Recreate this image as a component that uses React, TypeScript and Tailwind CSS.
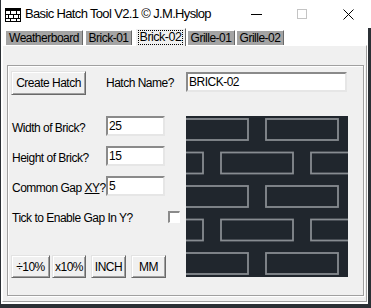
import React from "react";

const raised =
  "border border-t-[#e3e3e3] border-l-[#e3e3e3] border-r-[#696969] border-b-[#696969] shadow-[inset_1px_1px_0_#ffffff,inset_-1px_-1px_0_#a0a0a0] bg-[#f0f0f0]";
const sunken =
  "border-2 border-t-[#8a8a8a] border-l-[#8a8a8a] border-r-[#e6e6e6] border-b-[#e6e6e6] bg-white";

function TitleIcon() {
  return (
    <svg width="16" height="14" viewBox="0 0 16 14" className="shrink-0">
      <rect x="0.5" y="0.5" width="15" height="13" fill="#ffffff" stroke="#000" />
      <rect x="1" y="1" width="14" height="2" fill="#000" />
      <g stroke="#000" strokeWidth="1">
        <line x1="1" y1="6.5" x2="15" y2="6.5" />
        <line x1="1" y1="10.5" x2="15" y2="10.5" />
        <line x1="5.5" y1="3" x2="5.5" y2="6.5" />
        <line x1="11.5" y1="3" x2="11.5" y2="6.5" />
        <line x1="3.5" y1="6.5" x2="3.5" y2="10.5" />
        <line x1="8.5" y1="6.5" x2="8.5" y2="10.5" />
        <line x1="13.5" y1="6.5" x2="13.5" y2="10.5" />
        <line x1="5.5" y1="10.5" x2="5.5" y2="13" />
        <line x1="11.5" y1="10.5" x2="11.5" y2="13" />
      </g>
    </svg>
  );
}

function Tab({ label, width, ml, selected }: { label: string; width: number; ml: number; selected?: boolean }) {
  if (selected) {
    return (
      <div
        className="relative z-10 h-[18px] -mb-[1px] flex items-start justify-center pt-[1px] bg-[#f0f0f0] border-t border-l border-white border-r border-r-[#696969]"
        style={{ width, marginLeft: ml }}
      >
        <span className="px-[1px] leading-[13px] border border-dotted border-black text-[12.5px] tracking-[-0.5px] whitespace-nowrap">
          {label}
        </span>
      </div>
    );
  }
  return (
    <div
      className="h-[15px] flex items-center justify-center bg-[#a4a4a4] border-t border-l border-white border-r border-r-[#696969] text-[12px] tracking-[-0.5px] leading-none whitespace-nowrap"
      style={{ width, marginLeft: ml }}
    >
      {label}
    </div>
  );
}

function Field({ label, value }: { label: React.ReactNode; value: string }) {
  return (
    <div className="flex items-center h-[20px]">
      <div className="w-[95px] pl-[1px] pt-[3px] whitespace-nowrap">{label}</div>
      <div className={`${sunken} w-[59px] h-[20px] pl-[1px] flex items-center`}>{value}</div>
    </div>
  );
}

function Bricks() {
  const rows = [0, 1, 2, 3, 4];
  return (
    <svg width="162" height="161" viewBox="0 0 162 161" className="block">
      <rect width="162" height="161" fill="#20262d" />
      {rows.map((i) => {
        const y = 3 + i * 33.5;
        const xs = i % 2 === 0 ? [-10, 80, 170] : [-55, 35, 125];
        return xs.map((x) => (
          <rect
            key={`${i}-${x}`}
            x={x}
            y={y}
            width="72"
            height="21"
            fill="none"
            stroke="#878c91"
            strokeWidth="1.8"
          />
        ));
      })}
    </svg>
  );
}

export default function App() {
  return (
    <div className="w-[371px] h-[308px] bg-[#2b3035] flex flex-col font-['Liberation_Sans',Arial,sans-serif] text-black text-[12px] tracking-[-0.5px] overflow-hidden whitespace-nowrap">
      <div className="h-[28px] ml-[1px] bg-white flex items-center shrink-0">
        <div className="ml-[4px] mt-[1px]">
          <TitleIcon />
        </div>
        <div className="ml-[4px] text-[13px] tracking-[-0.65px] whitespace-nowrap">
          Basic Hatch Tool V2.1 © J.M.Hyslop
        </div>
        <div className="ml-auto flex h-full">
          <div className="w-[46px] h-full flex items-center justify-center">
            <div className="w-[11px] h-[1px] bg-black" />
          </div>
          <div className="w-[46px] h-full flex items-center justify-center">
            <div className="w-[10px] h-[10px] border border-[#c4c4c4]" />
          </div>
          <div className="w-[46px] h-full flex items-center justify-center">
            <svg width="11" height="11" viewBox="0 0 11 11">
              <path d="M0.5 0.5 L10.5 10.5 M10.5 0.5 L0.5 10.5" stroke="#000" strokeWidth="1" />
            </svg>
          </div>
        </div>
      </div>

      <div className="flex-1 ml-[1px] mr-[3px] mb-[4px] bg-white flex flex-col">
        <div className="h-[17px] flex items-end shrink-0">
          <Tab label="Weatherboard" width={78} ml={4} />
          <Tab label="Brick-01" width={47} ml={2} />
          <Tab label="Brick-02" width={51} ml={3} selected />
          <Tab label="Grille-01" width={48} ml={1} />
          <Tab label="Grille-02" width={48} ml={1} />
        </div>

        <div className="flex-1 ml-[1px] mr-[1px] mb-[2px] bg-[#f0f0f0] border-t border-l border-white border-r border-r-[#a0a0a0] border-b border-b-[#a0a0a0]">
          <div className="ml-[4px] mt-[19px] w-[357px] h-[231px] border border-[#a0a0a0] shadow-[1px_1px_0_#ffffff,inset_1px_1px_0_#ffffff] pl-[3px] pt-[5px] flex flex-col">
            <div className="flex items-start h-[24px]">
              <button className={`${raised} w-[75px] h-[24px] flex items-center justify-center`}>
                Create Hatch
              </button>
              <div className="ml-[20px] w-[80px] h-[24px] flex items-center">Hatch Name?</div>
              <div className={`${sunken} mt-[1px] w-[161px] h-[20px] pl-[1px] flex items-center`}>BRICK-02</div>
            </div>

            <div className="flex mt-[21px]">
              <div className="w-[175px] flex flex-col">
                <div className="flex flex-col gap-[10px]">
                  <Field label="Width of Brick?" value="25" />
                  <Field label="Height of Brick?" value="15" />
                  <Field
                    label={
                      <span>
                        Common Gap <span className="underline">XY</span>?
                      </span>
                    }
                    value="5"
                  />
                </div>
                <div className="mt-[15px] h-[12px] flex items-center">
                  <div className="w-[157px] pl-[1px] pt-[2px]">Tick to Enable Gap In Y?</div>
                  <div className="w-[12px] h-[12px] border-t-2 border-l-2 border-[#8a8a8a] border-r border-b border-r-white border-b-white bg-white" />
                </div>
                <div className="mt-[32px] flex">
                  <button className={`${raised} w-[39px] h-[23px] flex items-center justify-center`}>÷10%</button>
                  <button className={`${raised} ml-[2px] w-[34px] h-[23px] flex items-center justify-center`}>x10%</button>
                  <button className={`${raised} ml-[5px] w-[35px] h-[23px] flex items-center justify-center`}>INCH</button>
                  <button className={`${raised} ml-[5px] w-[35px] h-[23px] flex items-center justify-center`}>MM</button>
                </div>
              </div>
              <div className="w-[162px] h-[161px]">
                <Bricks />
              </div>
            </div>
          </div>
        </div>
      </div>
    </div>
  );
}
